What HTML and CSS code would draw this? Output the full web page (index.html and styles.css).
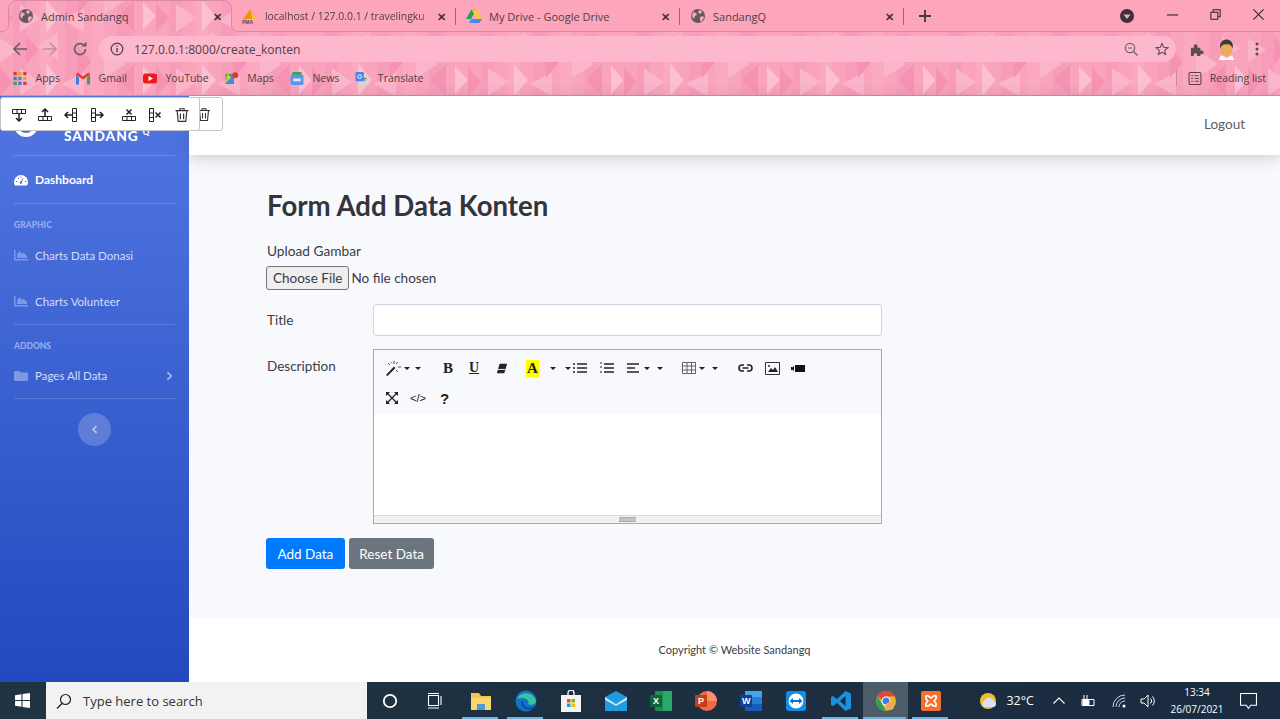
FILE: index.html
```html
<!DOCTYPE html>
<html>
<head>
<title>Admin Sandangq</title>
<link rel="stylesheet" href="styles.css">
</head>
<body>

<!-- browser window top -->
<div class="browser">
	<svg class="theme" width="1280" height="96">
		<defs>
			<pattern id="tri" x="0" y="32" width="156" height="64" patternUnits="userSpaceOnUse">
				<rect width="156" height="64" fill="#f9a3bd"/>
				<path d="M13 0h13v64H13z M65 0h13v64H65z M117 0h13v64h-13z" fill="#f79db9"/>
				<path d="M39 0h13v64H39z M91 0h13v64H91z" fill="#faa9c0"/>
				<path d="M0 6l18 12L0 30z M58 0l-20 14 20 14z M104 18l22 14-22 14z M20 36l20 14-20 14z M84 40l-22 12 22 12z M130 4l18 12-18 12z" fill="#fbb5ca"/>
				<path d="M26 4l13 14L26 32z M78 14l13 16-13 16z M134 32l-16 16 16 16z M0 36l13 14L0 64z" fill="#f693b2"/>
				<path d="M46 32l14 16-14 16z M143 34l13 14-13 14z" fill="#fcc0d2"/>
			</pattern>
		</defs>
		<rect width="1280" height="96" fill="url(#tri)"/>
		<path fill-rule="evenodd" fill="#fda5bb" d="M0 0H1280V32H0z M0 32C6 32 9 29 9 24V9C9 4 12 1 17 1H223C228 1 231 4 231 9V24C231 29 234 32 240 32z"/>
		<path fill="none" stroke="#d98aa2" d="M240 31.5H1280 M0 31.5C6 31.5 8.5 29 8.5 24V9C8.5 4 12 .5 17 .5H223C228 .5 231.500 4 231.500 9V24C231.500 29 234 31.500 240 31.500"/>
		<path stroke="#d98aa2" d="M0 95.500H1280"/>
	</svg>

	<div class="tabstrip">
		<div class="tab">
			<svg class="fav" viewBox="0 0 16 16"><circle cx="8" cy="8" r="7" fill="#5f5a5e"/><path d="M3 4l3 1 1 2-2 1-1 3-2-3z M9 2l3 1-1 3-3-1z M10 9l3-1 1 2-3 4-1-2z" fill="#fda5bb"/></svg>
			<span class="tab-title">Admin Sandangq</span>
			<span class="tab-x">&#10005;</span>
		</div>
		<div class="tab sep">
			<svg class="fav" viewBox="0 0 16 16"><path d="M1 11C3 7 6 6 8 1c1 4 5 6 7 10z" fill="#f29111"/><path d="M9 2l1 9h5c-2-4-5-5-6-9z" fill="#f8c23c"/><text x="0" y="15.500" class="pma">PMA</text></svg>
			<span class="tab-title fade">localhost / 127.0.0.1 / travelingku</span>
			<span class="tab-x">&#10005;</span>
		</div>
		<div class="tab sep">
			<svg class="fav" viewBox="0 0 16 16"><path d="M5.500 1.500h5L5 11H0z" fill="#1ea362"/><path d="M10.500 1.500L16 11h-5L5.500 1.500z" fill="#ffc62f"/><path d="M3 15l2.500-4H16l-2.500 4z" fill="#4688f4"/></svg>
			<span class="tab-title">My Drive - Google Drive</span>
			<span class="tab-x">&#10005;</span>
		</div>
		<div class="tab sep">
			<svg class="fav" viewBox="0 0 16 16"><circle cx="8" cy="8" r="7" fill="#5f5a5e"/><path d="M3 4l3 1 1 2-2 1-1 3-2-3z M9 2l3 1-1 3-3-1z M10 9l3-1 1 2-3 4-1-2z" fill="#fda5bb"/></svg>
			<span class="tab-title">SandangQ</span>
			<span class="tab-x">&#10005;</span>
		</div>
		<svg class="plus" viewBox="0 0 12 12"><path d="M6 0v12M0 6h12" stroke="#45383e" stroke-width="1.800"/></svg>
		<div class="win-btns">
			<svg class="tab-search" viewBox="0 0 14 14"><circle cx="7" cy="7" r="7" fill="#3b3338"/><path d="M3.500 5.500h7L7 10z" fill="#fda5bb"/></svg>
			<svg class="win" viewBox="0 0 14 14"><path d="M1 7.500h12" stroke="#2c2528" stroke-width="1.200"/></svg>
			<svg class="win" viewBox="0 0 14 14"><path d="M2 4.500h7.500V12H2z M4.500 4.500V2H12v7.500H9.500" fill="none" stroke="#2c2528" stroke-width="1.100"/></svg>
			<svg class="win" viewBox="0 0 14 14"><path d="M1.500 1.500l11 11M12.500 1.500l-11 11" stroke="#2c2528" stroke-width="1.100"/></svg>
		</div>
	</div>

	<div class="navrow">
		<svg class="nav-ico" viewBox="0 0 16 16"><path d="M15 8H2M8 2L2 8l6 6" fill="none" stroke="#6d5b63" stroke-width="1.700"/></svg>
		<svg class="nav-ico" viewBox="0 0 16 16"><path d="M1 8h13M8 2l6 6-6 6" fill="none" stroke="#c98a9f" stroke-width="1.700"/></svg>
		<svg class="nav-ico" viewBox="0 0 16 16"><path d="M13.500 8A5.500 5.500 0 1 1 11.500 3.800" fill="none" stroke="#6d5b63" stroke-width="1.700"/><path d="M9.500 5.500H14.500V.5z" fill="#6d5b63"/></svg>
		<div class="omnibox">
			<svg class="info" viewBox="0 0 14 14"><circle cx="7" cy="7" r="5.800" fill="none" stroke="#4a3f44" stroke-width="1.200"/><path d="M7 6v4.200M7 3.500v1.300" stroke="#4a3f44" stroke-width="1.300"/></svg>
			<span class="url">127.0.0.1:8000/create_konten</span>
			<svg class="omni-ico" viewBox="0 0 14 14"><circle cx="6" cy="6" r="4.700" fill="none" stroke="#75666c" stroke-width="1.200"/><path d="M9.500 9.500L13.500 13.500" stroke="#75666c" stroke-width="1.500"/><path d="M3.800 6h4.400" stroke="#75666c"/></svg>
			<svg class="omni-ico star" viewBox="0 0 14 14"><path d="M7 1.500l1.700 3.800 4.100.4-3.100 2.700.9 4L7 10.300l-3.600 2.100.9-4L1.200 5.700l4.100-.4z" fill="none" stroke="#5a4c52" stroke-width="1.100"/></svg>
		</div>
		<svg class="puzzle" viewBox="0 0 16 16"><path d="M1 6h3V4.500a2 2 0 0 1 4 0V6h3v3h1.500a2 2 0 0 1 0 4H11v2H7.500v-1.500a1.800 1.800 0 0 0-3.500 0V15H1z" fill="#5a4c52"/></svg>
		<svg class="avatar" viewBox="0 0 20 22"><path d="M4 17l6 3 6-3 2 5H2z" fill="#fff"/><ellipse cx="10" cy="11" rx="6.500" ry="7.500" fill="#eeaa5c"/><path d="M3.500 10C2 3 7 .5 10 .5S18 3 16.500 10C15 6 13 5.500 10 5.500S5 6 3.500 10z" fill="#3b3a36"/></svg>
		<svg class="kebab" viewBox="0 0 4 14"><circle cx="2" cy="2" r="1.500" fill="#5a4c52"/><circle cx="2" cy="7" r="1.500" fill="#5a4c52"/><circle cx="2" cy="12" r="1.500" fill="#5a4c52"/></svg>
	</div>

	<div class="bookmarks">
		<span class="bm">
			<svg class="bm-ico" viewBox="0 0 12 12"><g><rect width="3" height="3" fill="#d93a34"/><rect x="4.500" width="3" height="3" fill="#e9a120"/><rect x="9" width="3" height="3" fill="#d93a34"/><rect y="4.500" width="3" height="3" fill="#3a7de0"/><rect x="4.500" y="4.500" width="3" height="3" fill="#35a55a"/><rect x="9" y="4.500" width="3" height="3" fill="#e9a120"/><rect y="9" width="3" height="3" fill="#35a55a"/><rect x="4.500" y="9" width="3" height="3" fill="#3a7de0"/><rect x="9" y="9" width="3" height="3" fill="#d93a34"/></g></svg>
			Apps
		</span>
		<span class="bm">
			<svg class="bm-ico" viewBox="0 0 14 12"><path d="M0 2v10h3V5z" fill="#3f7fe4"/><path d="M14 2v10h-3V5z" fill="#34a853"/><path d="M0 2l7 5 7-5-1.500-2L7 4 1.500 0z" fill="#e5382c"/></svg>
			Gmail
		</span>
		<span class="bm">
			<svg class="bm-ico" viewBox="0 0 14 12"><rect y="1" width="14" height="10" rx="2.500" fill="#ee1a1a"/><path d="M5.500 3.500v5L10 6z" fill="#fff"/></svg>
			YouTube
		</span>
		<span class="bm">
			<svg class="bm-ico" viewBox="0 0 14 14"><path d="M0 2h9v11H0z" fill="#3fa45b"/><path d="M0 13l9-11v11z" fill="#4a86e8"/><path d="M2 2l4 4-6 6z" fill="#f3c431"/><circle cx="10.500" cy="3.500" r="3.200" fill="#e5382c"/></svg>
			Maps
		</span>
		<span class="bm">
			<svg class="bm-ico" viewBox="0 0 14 14"><rect x="2" y="0" width="10" height="5" fill="#36a35a"/><rect y="3" width="14" height="11" rx="1.500" fill="#5d94ec"/><rect x="3" y="7" width="8" height="3" fill="#dce8fb"/></svg>
			News
		</span>
		<span class="bm">
			<svg class="bm-ico" viewBox="0 0 14 14"><rect x="5" y="3" width="9" height="11" fill="#d6d6de"/><rect width="9" height="10" rx="1" fill="#4a86e8"/><circle cx="4.500" cy="5" r="2" fill="none" stroke="#fff"/><path d="M8 7h4M10 6v4" stroke="#777"/></svg>
			Translate
		</span>
		<span class="bm-sep"></span>
		<span class="bm">
			<svg class="bm-ico reading" viewBox="0 0 14 14"><rect x=".6" y=".6" width="12.800" height="12.800" rx="1.500" fill="none" stroke="#4e4045" stroke-width="1.100"/><path d="M3 4h2M3 7h2M3 10h2M6.500 4h4.500M6.500 7h4.500M6.500 10h4.500" stroke="#4e4045"/></svg>
			Reading list
		</span>
	</div>
</div>

<!-- the page itself -->
<div class="app">
	<div class="sidebar">
		<div class="brand">
			<span class="brand-logo"></span>
			<span class="brand-text">SANDANG<sup>Q</sup></span>
		</div>
		<hr class="side-hr">
		<div class="side-item active">
			<svg class="side-ico" viewBox="0 0 14 12"><path d="M7 1a7 7 0 0 0-7 7c0 1.400.4 2.600 1 3.500h12c.6-.9 1-2.100 1-3.500a7 7 0 0 0-7-7z" fill="#fff"/><circle cx="7" cy="8.500" r="1.300" fill="#4b6fdb"/><path d="M7 8.500l2-4" stroke="#4b6fdb"/><path d="M2 7.500h1.300M11 7.500h1.300M4 4l1 1M7 2.500v1.300" stroke="#4b6fdb"/></svg>
			Dashboard
		</div>
		<hr class="side-hr">
		<div class="side-head">GRAPHIC</div>
		<div class="side-item">
			<svg class="side-ico" viewBox="0 0 14 12"><path d="M0 1h1.500v9H14v1.500H0z M3 9V5l2.500-3L8 5l1.500-1.500L13 7v2z" fill="#7f98e6"/></svg>
			Charts Data Donasi
		</div>
		<div class="side-item">
			<svg class="side-ico" viewBox="0 0 14 12"><path d="M0 1h1.500v9H14v1.500H0z M3 9V5l2.500-3L8 5l1.500-1.500L13 7v2z" fill="#7f98e6"/></svg>
			Charts Volunteer
		</div>
		<hr class="side-hr">
		<div class="side-head">ADDONS</div>
		<div class="side-item last">
			<svg class="side-ico" viewBox="0 0 14 12"><path d="M0 2.500C0 1.700.6 1 1.300 1h3.700l1.500 1.500h6.200c.7 0 1.300.6 1.300 1.300v6c0 .7-.6 1.200-1.300 1.200H1.300C.6 11 0 10.500 0 9.800z" fill="#7f98e6"/></svg>
			Pages All Data
			<svg class="chev" viewBox="0 0 8 12"><path d="M1.500 1.500L6 6l-4.500 4.500" fill="none" stroke="#aebdf0" stroke-width="2"/></svg>
		</div>
		<hr class="side-hr">
		<div class="toggle">
			<svg viewBox="0 0 8 12" width="6" height="9"><path d="M6 1.500L1.500 6 6 10.500" fill="none" stroke="#b9c6f2" stroke-width="2.200"/></svg>
		</div>
	</div>

	<div class="main">
		<div class="topbar"><a class="logout">Logout</a></div>
		<div class="content">
			<h1>Form Add Data Konten</h1>
			<label class="upload-label">Upload Gambar</label>
			<input class="file" type="file">
			<div class="row title-row">
				<label>Title</label>
				<input class="text" type="text">
			</div>
			<div class="row">
				<label class="desc-label">Description</label>
				<div class="editor">
					<div class="tools">
						<div class="tool-line">
							<span class="tb w1"><svg viewBox="0 0 16 16" width="16" height="16"><path d="M1 15L9 6.500l1.500 1.500L2.500 16z" fill="#222"/><path d="M9 1v3M13 7h3M3 3l2 2M13 2l-2 2M13 12l-2-2M6 2v1" stroke="#555"/></svg><i class="caret"></i><i class="caret gap1"></i></span>
							<span class="tb bold w2">B</span>
							<span class="tb under w3">U</span>
							<span class="tb w3b"><svg viewBox="0 0 14 14" width="13" height="13"><path d="M5 2h8l-3 10H2z" fill="#222"/><path d="M3 8h8" stroke="#f8f9fc"/></svg></span>
							<span class="tb w4"><span class="hilite">A</span><i class="caret wide"></i></span>
							<span class="tb w5"><i class="caret flush"></i><svg class="lst nudge" viewBox="0 0 14 12"><path d="M4 2h10M4 6h10M4 10h10" stroke="#222" stroke-width="1.700"/><path d="M0 2h2M0 6h2M0 10h2" stroke="#222" stroke-width="1.700"/></svg></span>
							<span class="tb w6"><svg class="lst" viewBox="0 0 14 12"><path d="M4 2h10M4 6h10M4 10h10" stroke="#222" stroke-width="1.700"/><path d="M0 1h2M0 5h2M0 10h2" stroke="#666" stroke-width="1.500"/></svg></span>
							<span class="tb w7"><svg class="lst" viewBox="0 0 14 12"><path d="M0 2h12M0 6h8M0 10h12" stroke="#222" stroke-width="1.700"/></svg><i class="caret"></i><i class="caret gap"></i></span>
							<span class="tb w8"><svg class="lst" viewBox="0 0 14 12"><path d="M.5.500h13v11H.5z M.5 4h13M.5 8h13M5 .5v11M9.500.5v11" fill="none" stroke="#444" stroke-width=".8"/></svg><i class="caret"></i><i class="caret gap"></i></span>
							<span class="tb w9"><svg viewBox="0 0 15 8" width="15" height="8"><path d="M6 1H4a3 3 0 0 0 0 6h2 M9 1h2a3 3 0 0 1 0 6H9 M4.500 4h6" fill="none" stroke="#222" stroke-width="1.600"/></svg></span>
							<span class="tb w10"><svg viewBox="0 0 15 13" width="15" height="13"><path d="M.5.500h14v12H.5z" fill="none" stroke="#333"/><path d="M3 10l3-4 2 2 2-3 3 5z" fill="#222"/><circle cx="4" cy="4" r="1" fill="#222"/></svg></span>
							<span class="tb w11"><svg viewBox="0 0 14 9" width="14" height="9"><path d="M4 1h10v7H4z M0 4.500L3 2v5z M0 3h1v3H0z" fill="#111"/></svg></span>
						</div>
						<div class="tool-line">
							<span class="tb w12"><svg viewBox="0 0 12 12" width="12" height="12"><path d="M1 1l10 10M11 1L1 11" stroke="#222" stroke-width="1.400"/><path d="M0 0h4L0 4z M12 0v4L8 0z M0 12V8l4 4z M12 12H8l4-4z" fill="#222"/></svg></span>
							<span class="tb code">&lt;/&gt;</span>
							<span class="tb help">?</span>
						</div>
					</div>
					<div class="edit-area"></div>
					<div class="resize"><span class="grip"></span></div>
				</div>
			</div>
			<div class="actions">
				<button class="btn blue">Add Data</button>
				<button class="btn grey">Reset Data</button>
			</div>
		</div>
		<div class="footer">Copyright &copy; Website Sandangq</div>
	</div>

	<!-- table popovers from the editor, these sit over the sidebar -->
	<div class="pop pop-back">
		<svg viewBox="0 0 12 13" width="12" height="13"><path d="M0 2.500h12M4 2.500V.7h4v1.800M1.500 2.500l1 10h7l1-10M4.500 5v5.500M7.500 5v5.500" fill="none" stroke="#333" stroke-width="1.100"/></svg>
	</div>
	<div class="pop pop-front">
		<svg class="pi" viewBox="0 0 14 14"><path d="M.5 1.500h13v4H.5z M5 1.500v4M9.500 1.500v4" fill="none" stroke="#222"/><path d="M7 6v7M4 10l3 3 3-3" fill="none" stroke="#222" stroke-width="1.500"/></svg>
		<svg class="pi" viewBox="0 0 14 14"><path d="M.5 8.500h13v4H.5z M5 8.500v4M9.500 8.500v4" fill="none" stroke="#222"/><path d="M7 8V1M4 4l3-3 3 3" fill="none" stroke="#222" stroke-width="1.500"/></svg>
		<svg class="pi" viewBox="0 0 14 14"><path d="M8.500.5h4v13h-4z M8.500 5h4M8.500 9.500h4" fill="none" stroke="#222"/><path d="M8 7H1M4 4L1 7l3 3" fill="none" stroke="#222" stroke-width="1.500"/></svg>
		<svg class="pi" viewBox="0 0 14 14"><path d="M1.500.5h4v13h-4z M1.500 5h4M1.500 9.500h4" fill="none" stroke="#222"/><path d="M6 7h7M10 4l3 3-3 3" fill="none" stroke="#222" stroke-width="1.500"/></svg>
		<svg class="pi wide" viewBox="0 0 14 14"><path d="M.5 8.500h13v4H.5z M5 8.500v4M9.500 8.500v4" fill="none" stroke="#222"/><path d="M4.500 1.500l5 5M9.500 1.500l-5 5" stroke="#222" stroke-width="1.500"/></svg>
		<svg class="pi" viewBox="0 0 14 14"><path d="M1.500.5h4v13h-4z M1.500 5h4M1.500 9.500h4" fill="none" stroke="#222"/><path d="M7.500 4.500l5 5M12.500 4.500l-5 5" stroke="#222" stroke-width="1.500"/></svg>
		<svg class="pi bin" viewBox="0 0 12 13"><path d="M0 2.500h12M4 2.500V.7h4v1.800M1.500 2.500l1 10h7l1-10M4.500 5v5.500M7.500 5v5.500" fill="none" stroke="#333" stroke-width="1.100"/></svg>
	</div>
</div>

<!-- windows taskbar -->
<div class="taskbar">
	<div class="start"><svg viewBox="0 0 14 14" width="15" height="15"><path d="M0 2l6-.9V6.500H0z M7 1l7-1v6.500H7z M0 7.500h6v5.400L0 12z M7 7.500h7V14l-7-1z" fill="#fff"/></svg></div>
	<div class="search">
		<svg viewBox="0 0 16 16" width="16" height="16"><circle cx="9.500" cy="6.500" r="5" fill="none" stroke="#222" stroke-width="1.200"/><path d="M6 10.500L1 15.500" stroke="#222" stroke-width="1.300"/></svg>
		<span>Type here to search</span>
	</div>
	<div class="task-ico"><svg viewBox="0 0 16 16" width="16" height="16"><circle cx="8" cy="8" r="6.200" fill="none" stroke="#fff" stroke-width="1.800"/></svg></div>
	<div class="task-ico"><svg viewBox="0 0 16 16" width="16" height="16"><path d="M1.500 2.500h10v10h-10zM14 3v9" fill="none" stroke="#fff" stroke-width="1.100"/><path d="M1 .5h11M1 15h11" stroke="#fff" stroke-width="1"/></svg></div>
	<div class="task-ico open first"><svg viewBox="0 0 22 20" width="22" height="20"><path d="M1 2h8l2 3h10v14H1z" fill="#f6c544"/><path d="M1 7h20v12H1z" fill="#fbd86b"/><rect x="7" y="13" width="8" height="6" fill="#4a9bd4"/></svg></div>
	<div class="task-ico open"><svg viewBox="0 0 22 22" width="22" height="22"><circle cx="11" cy="11" r="10.500" fill="#1273c4"/><path d="M2 9C4 2 18 0 21 11c0 3-5 5-8 3 3-4-5-8-11-5z" fill="#35c3a0"/><path d="M7 11c0 6 6 10 12 6" fill="none" stroke="#0d4f9c" stroke-width="2"/></svg></div>
	<div class="task-ico"><svg viewBox="0 0 20 22" width="20" height="22"><path d="M7 5V3a3 3 0 0 1 6 0v2" fill="none" stroke="#fff" stroke-width="1.300"/><rect y="5" width="20" height="17" fill="#f4f4f4"/><rect x="6" y="9" width="3.500" height="3.500" fill="#f25022"/><rect x="10.500" y="9" width="3.500" height="3.500" fill="#7fba00"/><rect x="6" y="13.500" width="3.500" height="3.500" fill="#00a4ef"/><rect x="10.500" y="13.500" width="3.500" height="3.500" fill="#ffb900"/></svg></div>
	<div class="task-ico"><svg viewBox="0 0 22 20" width="22" height="20"><path d="M0 6l11-6 11 6v14H0z" fill="#1f9ce0"/><path d="M0 6l11 7 11-7v3l-11 6L0 9z" fill="#bfe4f8"/></svg></div>
	<div class="task-ico"><svg viewBox="0 0 22 20" width="22" height="20"><rect x="5" width="17" height="20" rx="1" fill="#1d8f52"/><rect x="13" width="9" height="20" fill="#33c481" opacity=".5"/><rect y="4" width="12" height="12" rx="1" fill="#10633a"/><text x="3" y="13" class="ms">X</text></svg></div>
	<div class="task-ico"><svg viewBox="0 0 22 20" width="22" height="20"><circle cx="12" cy="10" r="10" fill="#ed6c47"/><path d="M12 0a10 10 0 0 1 10 10H12z" fill="#ff8f6b"/><rect y="4" width="12" height="12" rx="1" fill="#c43e1c"/><text x="3" y="13" class="ms">P</text></svg></div>
	<div class="task-ico"><svg viewBox="0 0 22 20" width="22" height="20"><rect x="5" width="17" height="20" rx="1" fill="#2b7cd3"/><rect x="5" y="13" width="17" height="7" fill="#185abd"/><rect x="5" width="17" height="6" fill="#41a5ee"/><rect y="4" width="12" height="12" rx="1" fill="#103f91"/><text x="2" y="13" class="ms">W</text></svg></div>
	<div class="task-ico"><svg viewBox="0 0 20 20" width="20" height="20"><rect width="20" height="20" rx="3" fill="#0e8ee9"/><circle cx="10" cy="10" r="7.500" fill="#fff"/><path d="M3.500 10L7 7v2h6V7l3.500 3-3.500 3v-2H7v2z" fill="#0e6fc9"/></svg></div>
	<div class="task-ico open"><svg viewBox="0 0 20 20" width="20" height="20"><path d="M14.500 0L20 2.500v15L14.500 20 6 12l-4 3-2-1V6l2-1 4 3z" fill="#1c8fdd"/><path d="M14.500 5v10L9 10z" fill="#12273a"/></svg></div>
	<div class="task-ico open chrome"><svg viewBox="0 0 20 20" width="20" height="20"><circle cx="10" cy="10" r="10" fill="#e8b62f"/><path d="M1.500 5A10 10 0 0 1 19 5.500H10a4.500 4.500 0 0 0-4.500 3.500z" fill="#dd4a3d"/><path d="M1.500 5l4 7 4.500 8A10 10 0 0 1 1.500 5z" fill="#2e9f55"/><circle cx="10" cy="10" r="4.500" fill="#fff"/><circle cx="10" cy="10" r="3.500" fill="#3a80ea"/><circle cx="14" cy="15" r="4" fill="#eeaa5c"/></svg></div>
	<div class="task-ico open"><svg viewBox="0 0 20 20" width="20" height="20"><rect width="20" height="20" rx="2" fill="#f2712c"/><path d="M5 5c3-1 3 1 5 2 2-1 2-3 5-2 1 3-1 4-2 5 1 1 3 2 2 5-3 1-3-1-5-2-2 1-2 3-5 2-1-3 1-4 2-5-1-1-3-2-2-5z" fill="none" stroke="#fff" stroke-width="1.600"/></svg></div>
	<div class="tray">
		<svg viewBox="0 0 20 20" width="20" height="20"><circle cx="9" cy="10" r="8" fill="#f5bc2f"/><path d="M5 16a4 4 0 0 1 1-7 5 5 0 0 1 9 1 3.200 3.200 0 0 1 0 6z" fill="#d5e3f2"/></svg>
		<span class="temp">32&deg;C</span>
		<svg class="t-up" viewBox="0 0 12 7" width="12" height="7"><path d="M.5 6.500L6 1l5.500 5.500" fill="none" stroke="#fff" stroke-width="1.100"/></svg>
		<svg class="t-batt" viewBox="0 0 15 12" width="15" height="12"><path d="M2 4.500h12v6H2z" fill="none" stroke="#fff"/><path d="M3 5.500h6v4H3z M4 0v4M7 0v4" fill="#fff" stroke="#fff"/></svg>
		<svg class="t-wifi" viewBox="0 0 14 14" width="14" height="14"><path d="M1 13A12 12 0 0 1 13 1M4 13a9 9 0 0 1 9-9M7 13a6 6 0 0 1 6-6" fill="none" stroke="#cfd6dc"/><circle cx="12" cy="12" r="1.500" fill="#fff"/></svg>
		<svg class="t-vol" viewBox="0 0 16 14" width="16" height="14"><path d="M1 5h3l4-4v12l-4-4H1z" fill="none" stroke="#fff"/><path d="M10.500 4.500a3.500 3.500 0 0 1 0 5M12.500 2.500a6.500 6.500 0 0 1 0 9" fill="none" stroke="#fff"/></svg>
		<div class="clock"><div>13:34</div><div>26/07/2021</div></div>
		<svg class="t-note" viewBox="0 0 16 15" width="17" height="16"><path d="M.5.500h15v11H10l-2 3-2-3H.5z" fill="none" stroke="#fff"/></svg>
	</div>
</div>

</body>
</html>
```

FILE: styles.css
```css
* { box-sizing: border-box; }
html, body { margin: 0; height: 100%; overflow: hidden; }
body { display: flex; flex-direction: column; width: 1280px; height: 719px; font-family: "Lato", "Open Sans", sans-serif; color: #3a3b45; }

/* browser chrome */
.browser { position: relative; height: 96px; flex: none; font-family: "Open Sans", sans-serif; color: #4d4146; }
.theme { position: absolute; left: 0; top: 0; }
.tabstrip, .navrow, .bookmarks { position: relative; display: flex; align-items: center; }

.tabstrip { height: 32px; padding-left: 8px; }
.tab { position: relative; display: flex; align-items: center; width: 224px; height: 32px; padding: 0 5px 0 10px; font-size: 11px; }
.tab.sep::after { content: ""; position: absolute; right: 0; top: 8px; width: 1px; height: 17px; background: #8d6a76; }
.fav { width: 16px; height: 16px; flex: none; margin-right: 7px; }
.pma { font: bold 5px "Liberation Sans", sans-serif; fill: #5c4a50; }
.tab-title { flex: 1; white-space: nowrap; overflow: hidden; }
.fade { font-size: 10.400px; -webkit-mask-image: linear-gradient(90deg, #000 90%, transparent); mask-image: linear-gradient(90deg, #000 90%, transparent); }
.tab-x { width: 14px; margin-left: 8px; font-size: 11px; font-weight: bold; color: #3b3136; }
.fade + .tab-x { margin-left: 2px; }
.plus { width: 12px; height: 12px; margin-left: 15px; }
.win-btns { display: flex; align-items: center; margin-left: auto; }
.tab-search { width: 14px; height: 14px; margin-right: 32px; }
.win { width: 13px; height: 13px; margin-right: 30px; margin-top: -4px; }
.win:last-child { margin-right: 15px; }

.navrow { height: 30px; margin-top: 2px; padding-left: 12px; }
.nav-ico { width: 16px; height: 16px; margin-right: 14px; }
.omnibox { display: flex; align-items: center; width: 1077px; height: 26px; margin-left: -3px; padding: 0 7px 0 11px; border-radius: 13px; background: #fdb8ce; }
.info { width: 14px; height: 14px; margin-right: 10px; }
.url { flex: 1; font-size: 12.100px; color: #4d4146; }
.omni-ico { width: 14px; height: 14px; margin-left: 16px; }
.omni-ico.star { margin-left: 17px; }
.puzzle { width: 15px; height: 15px; margin-left: 14px; }
.avatar { width: 19px; height: 21px; margin-left: 12px; }
.kebab { width: 4px; height: 14px; margin-left: 19px; }

.bookmarks { height: 32px; margin-top: -2px; padding-left: 13px; font-size: 10.500px; }
.bm { display: flex; align-items: center; margin-right: 16px; white-space: nowrap; }
.bm-ico { width: 14px; height: 13px; margin-right: 8.500px; }
.bm-sep { width: 1px; height: 16px; margin-left: auto; margin-right: 11px; background: #c98a9f; }
.bookmarks .bm:last-child { margin-right: 14px; }
.reading { margin-right: 8px; }

/* page */
.app { position: relative; flex: 1; display: flex; min-height: 0; }
.sidebar { width: 189px; flex: none; padding: 0 14px; background: linear-gradient(180deg, #4e73df 10%, #224abe 100%); color: #fff; }
.brand { display: flex; align-items: flex-end; height: 50px; padding-bottom: 2px; }
.brand-logo { width: 24px; height: 24px; flex: none; margin-bottom: 7px; border: 4px solid #fff; border-radius: 50%; }
.brand-text { margin-left: 26px; font-size: 13.700px; font-weight: 900; letter-spacing: 1px; line-height: 16px; }
.brand-text sup { font-size: 8px; line-height: 0; margin-left: 4px; }
.side-hr { height: 1px; margin: 0; border: 0; background: rgba(255,255,255,.17); }
.brand + .side-hr { margin-top: 9px; }
.side-item { display: flex; align-items: center; height: 46px; font-size: 11.500px; color: #d4dcf6; }
.side-item.active { height: 47px; font-size: 12px; font-weight: 700; color: #fff; }
.side-item.last { height: 45px; }
.side-ico { width: 14px; height: 12px; flex: none; margin-right: 7px; }
.side-head { height: 28px; padding-top: 16px; font-size: 8.500px; line-height: 11px; font-weight: 900; color: #98abea; }
.chev { width: 7px; height: 10px; margin-left: auto; margin-right: 2px; }
.toggle { display: flex; align-items: center; justify-content: center; width: 33px; height: 33px; margin: 14px 0 0 64px; border-radius: 50%; background: rgba(255,255,255,.2); }

.main { flex: 1; display: flex; flex-direction: column; min-width: 0; background: #f8f9fc; }
.topbar { display: flex; align-items: center; justify-content: flex-end; height: 59px; padding: 0 35px 3px 0; background: #fff; box-shadow: 0 3px 14px rgba(58,59,69,.22); font-size: 13.500px; color: #5a5c69; }
.content { flex: 1; padding: 34px 0 0 78px; }
h1 { margin: 0 0 18px; font-size: 27.600px; line-height: 34px; font-weight: 700; color: #33343d; }
.upload-label { display: block; font-size: 13.700px; line-height: 20px; }
.file { display: block; height: 24px; margin: 5px 0 0 -1px; font: 13.500px "Lato", sans-serif; color: #3a3b45; }
.file::file-selector-button { height: 24px; margin-right: 2px; padding: 0 6px; border: 1px solid #767676; border-radius: 3px; background: #efefef; font: 13.500px "Lato", sans-serif; color: #3a3b45; }
.row { display: flex; width: 615px; margin-top: 13px; font-size: 13.500px; }
.row label { width: 106px; flex: none; }
.title-row { align-items: center; margin-top: 14px; }
.desc-label { padding-top: 9px; }
.text { flex: 1; height: 32px; border: 1px solid #d1d3e2; border-radius: 4px; background: #fff; }
.editor { flex: 1; height: 175px; display: flex; flex-direction: column; border: 1px solid #a9a9a9; }
.tools { height: 64px; padding-top: 3px; background: #f8f9fc; }
.tool-line { display: flex; align-items: center; height: 30px; }
.tb { display: flex; align-items: center; flex: none; height: 30px; color: #222; }
.caret { display: inline-block; margin-left: 3px; border: 3.500px solid transparent; border-top-color: #222; border-bottom: 0; }
.caret.gap { margin-left: 7px; }
.caret.gap1 { margin-left: 5px; }
.caret.wide { margin-left: 11px; }
.caret.flush { margin-left: 0; }
.lst { width: 14px; height: 12px; }
.nudge { margin-left: 2px; }
.bold { font: bold 15px "Liberation Serif", serif; }
.under { font: bold 14px "Liberation Serif", serif; text-decoration: underline; }
.hilite { width: 13px; text-align: center; font: bold 15px "Liberation Serif", serif; background: #ff0; }
.code { font: 11px "Liberation Sans", sans-serif; margin-left: 12px; }
.help { font: bold 15px "Liberation Sans", sans-serif; margin-left: 14px; }
.w1 { margin-left: 11px; width: 58px; }
.w2 { width: 26px; }
.w3 { width: 26px; }
.w3b { width: 31px; }
.w4 { width: 39px; }
.w5 { width: 35px; }
.w6 { width: 27px; }
.w7 { width: 55px; }
.w8 { width: 56px; }
.w9 { width: 27px; }
.w10 { width: 26px; }
.w11 { width: 20px; }
.w12 { margin-left: 12px; width: 12px; }
.edit-area { flex: 1; background: #fff; }
.resize { display: flex; justify-content: center; align-items: center; height: 8px; border-top: 1px solid #d8d8d8; background: #f2f2f2; }
.grip { width: 17px; height: 5px; border-top: 1px solid #aaa; border-bottom: 1px solid #aaa; background: #c4c4c4; }
.actions { display: flex; gap: 4px; margin-top: 14px; margin-left: -1px; }
.btn { height: 31px; padding: 0 11px; border: 0; border-radius: 3px; font: 13.500px "Lato", sans-serif; color: #fff; }
.blue { padding: 0 11.500px; background: #007bff; }
.grey { padding: 0 10.500px; background: #6c757d; }
.footer { height: 65px; padding-top: 26px; background: #fff; text-align: center; font-size: 11px; line-height: 14px; color: #3a3b45; }

/* popovers */
.pop { position: absolute; top: 1px; display: flex; align-items: center; height: 34px; padding-top: 1px; background: #fff; border: 1px solid #c4c4c4; border-radius: 3px; }
.pop-back { left: 100px; width: 123px; justify-content: flex-end; padding-right: 12px; }
.pop-front { left: 0; width: 200px; padding-left: 11px; gap: 12px; }
.pi { width: 14px; height: 14px; flex: none; }
.pi.wide { margin-left: 6px; }
.pi.bin { margin-left: 1px; }

/* taskbar */
.taskbar { position: relative; display: flex; align-items: center; flex: none; height: 37px; background: linear-gradient(90deg, #1f3442, #1b2b40); color: #fff; }
.start { display: flex; align-items: center; justify-content: center; width: 46px; height: 37px; padding-right: 2px; }
.search { display: flex; align-items: center; gap: 11px; width: 321px; height: 37px; padding-left: 10px; background: #f2f2f2; font: 13px "Open Sans", sans-serif; color: #333; }
.task-ico { position: relative; display: flex; align-items: center; justify-content: center; width: 45px; height: 37px; flex: none; }
.task-ico.first { margin-left: 1px; }
.task-ico.open::after { content: ""; position: absolute; left: 4px; right: 5px; bottom: 0; height: 2px; background: #6fb3dc; }
.task-ico.chrome { background: #4c5c68; }
.task-ico.chrome::after { left: 0; right: 2px; }
.tray { display: flex; align-items: center; margin-left: auto; padding-right: 23px; font-family: "Open Sans", sans-serif; }
.temp { margin-left: 7px; font-size: 12.500px; }
.t-up { margin-left: 19px; }
.t-batt { margin-left: 15px; }
.t-wifi { margin-left: 17px; }
.t-vol { margin-left: 14px; }
.clock { margin-left: 13px; width: 56px; text-align: center; font-size: 10px; line-height: 17px; }
.t-note { margin-left: 15px; }
.ms { font: bold 9px "Liberation Sans", sans-serif; fill: #fff; }
```
